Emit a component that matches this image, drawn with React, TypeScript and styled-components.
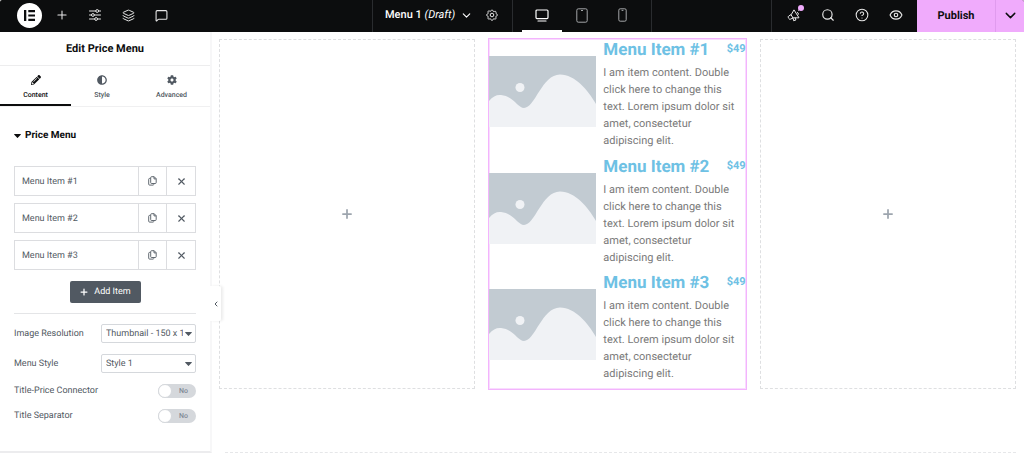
import React, { useState } from "react";
import styled, { createGlobalStyle, css } from "styled-components";
import { ChevronDown, ChevronLeft, CircleHelp, Eye, Layers, MessageSquare, Plus, Search, X } from "lucide-react";
import { FaAdjust, FaCog, FaPencilAlt } from "react-icons/fa";

const GlobalStyle = createGlobalStyle`
  *, *::before, *::after { box-sizing: border-box; }
  body {
    margin: 0;
    background: #fff;
    color: #515962;
    font-family: Roboto, "Liberation Sans", sans-serif;
    text-rendering: geometricPrecision;
  }
  button, select { font-family: inherit; text-rendering: inherit; }
  svg { display: block; flex: none; }
`;

const Page = styled.div`
  min-height: 100vh;
  display: flex;
  flex-direction: column;
`;

/* Top bar */
const TopBar = styled.header`
  display: grid;
  grid-template-columns: 1fr auto 1fr;
  height: 32px;
  background: #0c0d0e;
  color: #fff;
  border-radius: 2px 2px 0 0;
  overflow: hidden;
`;

const BarStart = styled.div`
  display: flex;
  align-items: center;
  gap: 9px;
  padding: 0 0 2px 17px;
`;

const BarCenter = styled.div`
  display: flex;
  border-left: 1px solid #2a2c2f;
  border-right: 1px solid #2a2c2f;
`;

const BarEnd = styled.div`
  display: flex;
  justify-content: flex-end;
`;

const Tools = styled.div`
  display: flex;
  align-items: center;
  gap: 10px;
  padding: 0 9px 2px 10px;
  border-left: 1px solid #2a2c2f;
`;

const LogoButton = styled.button`
  display: grid;
  place-items: center;
  width: 25px;
  height: 25px;
  margin-right: -1px;
  padding: 0;
  border: 0;
  border-radius: 50%;
  background: #fff;
`;

const BarButton = styled.button`
  position: relative;
  display: grid;
  place-items: center;
  width: 24px;
  height: 24px;
  padding: 0;
  border: 0;
  background: none;
  color: #e8e8e8;
`;

const Dot = styled.span`
  position: absolute;
  top: 2px;
  right: 2px;
  width: 6px;
  height: 6px;
  border-radius: 50%;
  background: #f0abfc;
`;

const DocumentGroup = styled.div`
  display: flex;
  align-items: center;
  justify-content: space-between;
  width: 139px;
  padding: 0 8px 2px 12px;
`;

const DocumentButton = styled.button`
  display: flex;
  align-items: center;
  gap: 5px;
  padding: 0;
  border: 0;
  background: none;
  color: #fff;
  font-size: 11px;
  font-weight: 500;
  line-height: 16px;
  white-space: pre;

  em { font-weight: 400; }
`;

const Devices = styled.div`
  display: flex;
  padding: 0 9px;
  border-left: 1px solid #2a2c2f;
`;

const DeviceButton = styled.button<{ $active?: boolean }>`
  display: grid;
  place-items: center;
  width: 40px;
  padding: 0;
  border: 0;
  border-bottom: 2px solid ${(p) => (p.$active ? "#fff" : "transparent")};
  background: none;
  color: ${(p) => (p.$active ? "#fff" : "#a4a6a8")};
`;

const PublishButton = styled.button`
  width: 78px;
  padding: 0 0 2px;
  border: 0;
  background: #f0abfc;
  color: #0c0d0e;
  font-size: 11px;
  font-weight: 700;
`;

const PublishMenuButton = styled.button`
  display: grid;
  place-items: center;
  width: 29px;
  padding: 0 0 2px;
  border: 0;
  border-left: 1px solid #e09bee;
  background: #f0abfc;
  color: #0c0d0e;
`;

/* Panel */
const Workspace = styled.div`
  flex: 1;
  display: flex;
`;

const Panel = styled.aside`
  position: relative;
  flex: none;
  width: 212px;
  border-right: 2px solid #f7f7f8;
  border-bottom: 2px solid #ececee;
`;

const PanelTitle = styled.h1`
  margin: 0;
  height: 34px;
  border-bottom: 1px solid #ededee;
  color: #0c0d0e;
  font-size: 11px;
  font-weight: 700;
  line-height: 33px;
  text-align: center;
`;

const Tabs = styled.div`
  display: grid;
  grid-template-columns: 71fr 62fr 77fr;
  height: 41px;
  border-bottom: 1px solid #f0f0f1;
`;

const Tab = styled.button<{ $active?: boolean }>`
  display: flex;
  flex-direction: column;
  align-items: center;
  gap: 5px;
  padding: 9px 0 0;
  border: 0;
  border-bottom: 2px solid ${(p) => (p.$active ? "#0c0d0e" : "transparent")};
  background: none;
  color: ${(p) => (p.$active ? "#0c0d0e" : "#515962")};
  font-size: 7px;
  font-weight: 500;
  line-height: 10px;
`;

const Section = styled.section`
  padding: 21px 14px 28px;
`;

const SectionToggle = styled.button`
  display: flex;
  align-items: center;
  gap: 4px;
  margin-bottom: 22px;
  padding: 0;
  border: 0;
  background: none;
  color: #0c0d0e;
  font-size: 10px;
  font-weight: 700;
  line-height: 16px;
`;

const Repeater = styled.ul`
  display: grid;
  gap: 7px;
  margin: 0 0 11px;
  padding: 0;
  list-style: none;
`;

const RepeaterRow = styled.li`
  display: grid;
  grid-template-columns: 1fr 28px 29px;
  height: 30px;
  border: 1px solid #dcdde0;
`;

const cell = css`
  padding: 0;
  border: 0;
  background: none;
  color: #515962;
`;

const RowTitle = styled.button`
  ${cell}
  padding: 1px 0 0 7px;
  font-size: 9px;
  text-align: left;
`;

const RowAction = styled.button`
  ${cell}
  display: grid;
  place-items: center;
  border-left: 1px solid #dcdde0;
`;

const AddButton = styled.button`
  display: flex;
  align-items: center;
  justify-content: center;
  gap: 5px;
  width: 71px;
  height: 22px;
  margin: 0 auto;
  padding: 0;
  border: 0;
  border-radius: 2px;
  background: #515962;
  color: #fff;
  font-size: 9px;
  font-weight: 400;
`;

const Controls = styled.div`
  display: grid;
  gap: 11px;
  margin-top: 10px;
  padding-top: 10px;
  border-top: 1px solid #e4e5e7;
`;

const Control = styled.div`
  display: flex;
  align-items: center;
  justify-content: space-between;
`;

const Label = styled.label`
  font-size: 9px;
  line-height: 14px;
`;

const SelectBox = styled.div`
  display: grid;
  grid-template: 19px / 95px;
  align-items: center;

  > * { grid-area: 1 / 1; }
  > svg { justify-self: end; margin-right: 4px; pointer-events: none; }
`;

const Select = styled.select`
  appearance: none;
  width: 100%;
  height: 19px;
  padding: 0 12px 0 4px;
  border: 1px solid #d5d8dc;
  border-radius: 2px;
  background: #fff;
  color: #515962;
  font-size: 9px;
`;

const SwitchTrack = styled.span`
  display: grid;
  grid-template: 14px / 38px;
  border-radius: 7px;
  background: #d5d8dc;
  > * { grid-area: 1 / 1; }
`;

const SwitchInput = styled.input`
  appearance: none;
  margin: 0;
  border-radius: 7px;

  &::before {
    content: "";
    display: block;
    width: 14px;
    height: 14px;
    border: 1px solid #d5d8dc;
    border-radius: 50%;
    background: #fff;
  }
  &:checked::before { margin-left: 24px; }
`;

const SwitchText = styled.span<{ $on: boolean }>`
  padding: 0 8px;
  color: #818a96;
  font-size: 7px;
  font-weight: 500;
  line-height: 14px;
  text-align: ${(p) => (p.$on ? "left" : "right")};
  pointer-events: none;
`;

const CollapseButton = styled.button`
  position: absolute;
  top: 254px;
  left: 210px;
  display: grid;
  place-items: center;
  width: 11px;
  height: 35px;
  padding: 0;
  border: 0;
  border-radius: 0 2px 2px 0;
  background: #fff;
  box-shadow: 2px 0 3px rgba(0, 0, 0, 0.08);
  color: #515962;
`;

/* Canvas */
const Canvas = styled.main`
  flex: 1;
  display: flex;
  flex-direction: column;
  justify-content: space-between;
  padding: 7px 8px 0 7px;
`;

const Columns = styled.div`
  display: grid;
  grid-template-columns: repeat(3, 1fr);
  gap: 14px;
`;

const EmptyColumn = styled.div`
  display: grid;
  place-items: center;
  border: 1px dashed #dedfe1;
`;

const AddElement = styled.button`
  display: grid;
  place-items: center;
  width: 20px;
  height: 20px;
  padding: 0;
  border: 0;
  background: none;
  color: #9da5ae;
`;

const PriceMenu = styled.ul`
  display: grid;
  grid-auto-rows: 1fr;
  min-height: 350px;
  margin: 0;
  padding: 0;
  list-style: none;
  outline: 1px solid #f3b4fd;
  box-shadow: inset 0 0 0 1px #f9dcfe;
`;

const MenuItem = styled.li`
  display: flex;
  gap: 7px;
`;

const Placeholder = styled.svg`
  width: 107px;
  height: 71px;
  margin-top: 17px;
`;

const ItemBody = styled.div`
  flex: 1;
`;

const ItemHead = styled.div`
  display: flex;
  justify-content: space-between;
  color: #6ec1e4;
  font-weight: 700;
`;

const ItemTitle = styled.h2`
  margin: 0;
  font-size: 17px;
  line-height: 23px;
`;

const Price = styled.span`
  font-size: 11px;
  line-height: 19px;
`;

const Description = styled.p`
  margin: 2px 0 0;
  padding-right: 6px;
  color: #7a7a7a;
  font-size: 11px;
  line-height: 17px;
`;

const NextSection = styled.div`
  height: 1px;
  margin-left: 6px;
  border-top: 1px dashed #e6e7e9;
`;

const LogoMark = () => (
  <svg width="11" height="11" viewBox="0 0 11 11" fill="#0c0d0e">
    <path d="M0 0h2.3v11H0zM4.3 0H11v2.2H4.3zM4.3 4.4H11v2.2H4.3zM4.3 8.8H11V11H4.3z" />
  </svg>
);

const SlidersIcon = () => (
  <svg width="12" height="12" viewBox="0 0 12 12" fill="none" stroke="currentColor" strokeWidth="1">
    <path d="M.5 2h6.2M9.7 2h2M.5 6h2M5.3 6h6.2M.5 10h5.2M8.5 10h3" strokeLinecap="round" />
    <circle cx="8.2" cy="2" r="1.4" />
    <circle cx="3.9" cy="6" r="1.4" />
    <circle cx="7.1" cy="10" r="1.4" />
  </svg>
);

const GearIcon = () => (
  <svg width="12" height="12" viewBox="0 0 24 24" fill="none" stroke="currentColor" strokeWidth="2" strokeLinejoin="round">
    <path d="M10 3.6c.5-2.1 3.5-2.1 4 0a2.06 2.06 0 0 0 3.07 1.27c1.84-1.12 3.97 1 2.85 2.85A2.06 2.06 0 0 0 21.2 10c2.1.5 2.1 3.5 0 4a2.06 2.06 0 0 0-1.28 3.07c1.12 1.84-1 3.97-2.85 2.85A2.06 2.06 0 0 0 14 21.2c-.5 2.1-3.5 2.1-4 0a2.06 2.06 0 0 0-3.07-1.28c-1.84 1.12-3.97-1-2.85-2.85A2.06 2.06 0 0 0 2.8 14c-2.1-.5-2.1-3.5 0-4a2.06 2.06 0 0 0 1.28-3.07c-1.12-1.84 1-3.97 2.85-2.85A2.06 2.06 0 0 0 10 3.6z" />
    <circle cx="12" cy="12" r="3.6" />
  </svg>
);

const DesktopIcon = () => (
  <svg width="14" height="13" viewBox="0 0 14 13" fill="none" stroke="currentColor" strokeWidth="1.2" strokeLinecap="round">
    <rect x="1" y="1" width="12" height="8.6" rx="1" />
    <path d="M3 12h8" />
  </svg>
);

const TabletIcon = () => (
  <svg width="12" height="15" viewBox="0 0 12 15" fill="none" stroke="currentColor">
    <rect x=".8" y=".8" width="10.4" height="13.4" rx="1.5" />
    <path d="M5 2.5h2" />
  </svg>
);

const PhoneIcon = () => (
  <svg width="9" height="14" viewBox="0 0 9 14" fill="none" stroke="currentColor">
    <rect x=".8" y=".8" width="7.4" height="12.4" rx="1.4" />
    <path d="M3.6 2.4h1.8" />
  </svg>
);

const MegaphoneIcon = () => (
  <svg width="14" height="14" viewBox="0 0 14 14" fill="none" stroke="currentColor" strokeLinecap="round" strokeLinejoin="round">
    <path d="M7.2 2.2l4.8 7.6-6 .1-2.3 1.2a1.4 1.4 0 0 1-1.9-.6l-.4-.7a1.4 1.4 0 0 1 .5-1.9L4 6.7zM4 6.7l2 3.2M5.8 10l1 2.5M8.2 9.8l.7 2.2-2 .6M10.4 4.4a1.5 1.5 0 0 1 1 1.9M11.4 2.3l1-.8" />
  </svg>
);

const CopyIcon = () => (
  <svg width="9" height="10" viewBox="0 0 9 10" fill="none" stroke="currentColor" strokeWidth=".9" strokeLinejoin="round">
    <path d="M3.6.7h2.6l2 2v3.9a.9.9 0 0 1-.9.9H3.6a.9.9 0 0 1-.9-.9v-5a.9.9 0 0 1 .9-.9zM6 .8v2.1h2.1M2.4 2.4h-.8a.9.9 0 0 0-.9.9v4.9a.9.9 0 0 0 .9.9H5a.9.9 0 0 0 .9-.8" />
  </svg>
);

const Caret = () => (
  <svg width="7" height="4" viewBox="0 0 7 4" fill="currentColor">
    <path d="M.6 0h5.8a.4.4 0 0 1 .3.7L3.8 3.8a.4.4 0 0 1-.6 0L.3.7A.4.4 0 0 1 .6 0z" />
  </svg>
);

function SwitchControl({ id, label }: { id: string; label: string }) {
  const [on, setOn] = useState(false);
  return (
    <Control>
      <Label htmlFor={id}>{label}</Label>
      <SwitchTrack>
        <SwitchInput id={id} type="checkbox" role="switch" checked={on} onChange={() => setOn(!on)} />
        <SwitchText $on={on} aria-hidden="true">{on ? "Yes" : "No"}</SwitchText>
      </SwitchTrack>
    </Control>
  );
}

function SelectControl({ id, label, options }: { id: string; label: string; options: string[] }) {
  return (
    <Control>
      <Label htmlFor={id}>{label}</Label>
      <SelectBox>
        <Select id={id}>
          {options.map((o) => <option key={o}>{o}</option>)}
        </Select>
        <Caret />
      </SelectBox>
    </Control>
  );
}

const items = ["Menu Item #1", "Menu Item #2", "Menu Item #3"];
const content = "I am item content. Double click here to change this text. Lorem ipsum dolor sit amet, consectetur adipiscing elit.";

export default function App() {
  return (
    <Page>
      <GlobalStyle />
      <TopBar>
        <BarStart>
          <LogoButton aria-label="Main menu"><LogoMark /></LogoButton>
          <BarButton aria-label="Add element"><Plus size={14} strokeWidth={1.8} /></BarButton>
          <BarButton aria-label="Site settings"><SlidersIcon /></BarButton>
          <BarButton aria-label="Structure"><Layers size={13} strokeWidth={1.8} /></BarButton>
          <BarButton aria-label="Notes"><MessageSquare size={13} strokeWidth={2} /></BarButton>
        </BarStart>
        <BarCenter>
          <DocumentGroup>
            <DocumentButton>
              <span>Menu 1 <em>(Draft)</em></span>
              <ChevronDown size={13} strokeWidth={2} />
            </DocumentButton>
            <BarButton aria-label="Page settings"><GearIcon /></BarButton>
          </DocumentGroup>
          <Devices>
            <DeviceButton $active aria-label="Desktop"><DesktopIcon /></DeviceButton>
            <DeviceButton aria-label="Tablet"><TabletIcon /></DeviceButton>
            <DeviceButton aria-label="Mobile"><PhoneIcon /></DeviceButton>
          </Devices>
        </BarCenter>
        <BarEnd>
          <Tools>
            <BarButton aria-label="What's new"><MegaphoneIcon /><Dot /></BarButton>
            <BarButton aria-label="Finder"><Search size={14} strokeWidth={2} /></BarButton>
            <BarButton aria-label="Help"><CircleHelp size={14} strokeWidth={1.8} /></BarButton>
            <BarButton aria-label="Preview"><Eye size={14} strokeWidth={2} /></BarButton>
          </Tools>
          <PublishButton>Publish</PublishButton>
          <PublishMenuButton aria-label="Save options"><ChevronDown size={17} strokeWidth={2} /></PublishMenuButton>
        </BarEnd>
      </TopBar>
      <Workspace>
        <Panel>
          <PanelTitle>Edit Price Menu</PanelTitle>
          <Tabs role="tablist">
            <Tab role="tab" aria-selected="true" $active><FaPencilAlt size={10} />Content</Tab>
            <Tab role="tab" aria-selected="false"><FaAdjust size={10} />Style</Tab>
            <Tab role="tab" aria-selected="false"><FaCog size={10} />Advanced</Tab>
          </Tabs>
          <Section>
            <SectionToggle aria-expanded="true"><Caret />Price Menu</SectionToggle>
            <Repeater>
              {items.map((name) => (
                <RepeaterRow key={name}>
                  <RowTitle>{name}</RowTitle>
                  <RowAction aria-label={`Duplicate ${name}`}><CopyIcon /></RowAction>
                  <RowAction aria-label={`Remove ${name}`}><X size={11} strokeWidth={2.4} /></RowAction>
                </RepeaterRow>
              ))}
            </Repeater>
            <AddButton><Plus size={10} strokeWidth={3} />Add Item</AddButton>
            <Controls>
              <SelectControl id="resolution" label="Image Resolution" options={["Thumbnail - 150 x 150", "Full"]} />
              <SelectControl id="menu-style" label="Menu Style" options={["Style 1", "Style 2"]} />
              <SwitchControl id="connector" label="Title-Price Connector" />
              <SwitchControl id="separator" label="Title Separator" />
            </Controls>
          </Section>
          <CollapseButton aria-label="Hide panel"><ChevronLeft size={8} strokeWidth={3} /></CollapseButton>
        </Panel>
        <Canvas>
          <Columns>
            <EmptyColumn><AddElement aria-label="Add to first column"><Plus size={14} strokeWidth={3} /></AddElement></EmptyColumn>
            <PriceMenu>
              {items.map((name) => (
                <MenuItem key={name}>
                  <Placeholder viewBox="0 0 107 71" aria-hidden="true">
                    <path fill="#c2cbd2" d="M0 0h107v71H0z" />
                    <circle cx="31" cy="31.5" r="4.5" fill="#f0f2f5" />
                    <path fill="#f0f2f5" d="M0 45C4 40 8 38.5 12 39c12 1 17 13 23 13 11 0 18-33.5 36-33.5C86 18.5 99 34 107 48v23H0z" />
                  </Placeholder>
                  <ItemBody>
                    <ItemHead>
                      <ItemTitle>{name}</ItemTitle>
                      <Price>$49</Price>
                    </ItemHead>
                    <Description>{content}</Description>
                  </ItemBody>
                </MenuItem>
              ))}
            </PriceMenu>
            <EmptyColumn><AddElement aria-label="Add to third column"><Plus size={14} strokeWidth={3} /></AddElement></EmptyColumn>
          </Columns>
          <NextSection />
        </Canvas>
      </Workspace>
    </Page>
  );
}
